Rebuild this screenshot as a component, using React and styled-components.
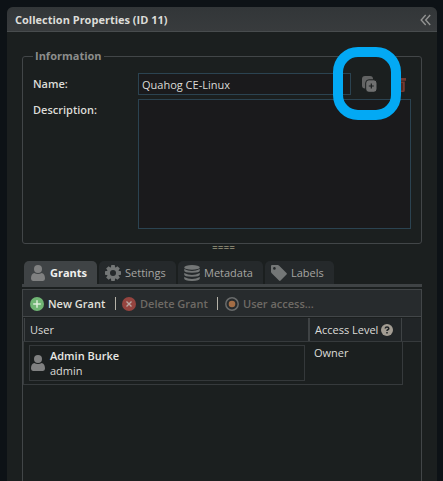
import React from 'react';
import styled, { createGlobalStyle } from 'styled-components';

const Global = createGlobalStyle`
  * { box-sizing: border-box; }
  html, body { margin: 0; height: 100%; background: #0d1216; overflow: hidden; }
  body { font: 11px/16px "Open Sans", "Noto Sans", sans-serif; color: #dcdcd8; }
`;
const Page = styled.main`
  height: 481px; width: 443px; padding: 7px 6px 0 7px; position: relative; overflow: hidden;
`;
const Panel = styled.section`
  height: 500px; background: #1b1f1f; border-radius: 6px 6px 0 0; overflow: hidden;
`;
const Header = styled.header`
  height: 25px; padding: 1px 6px 0 8px; border-bottom: 1px solid #484c4e;
  background: linear-gradient(#323638, #383b3d);
  display: flex; align-items: center; justify-content: space-between;
  font-weight: 700;
  svg { display: block; }
`;
const Body = styled.div`padding: 16px 15px 0;`;
const Fieldset = styled.fieldset`
  margin: 0; padding: 9px 10px 0; height: 196px; border: 1px solid #424648; border-radius: 3px;
`;
const Legend = styled.legend`
  width: 71px; padding: 1px 2px 1px; color: #8c8d8c; font-weight: 700; line-height: 14px;
`;
const Field = styled.div`
  display: grid; grid-template-columns: 105px 213px 1fr; height: 26px;
`;
const Label = styled.label`font-weight: 600; padding-top: 3px;`;
const Input = styled.div`
  height: 22px; border: 1px solid #2b4351; background: #1a1a1c; padding: 3px 3px 0;
`;
const Actions = styled.div`
  display: flex; padding: 3px 0 0 11px; gap: 15px;
  svg { display: block; }
  svg:last-child { margin-top: 2px; }
`;
const TextArea = styled.div`
  grid-column: 2 / 4; width: 273px; height: 130px; border: 1px solid #2b4351; background: #1a1a1c;
`;
const Splitter = styled.div`
  height: 17px; padding-left: 3px; text-align: center; font-size: 10px; line-height: 7px; color: #cfc9a8;
`;
const Tabs = styled.nav`
  display: flex; gap: 2px; padding: 0 2px; height: 26px; border-bottom: 3px solid #3f4345;
`;
const Tab = styled.div`
  width: ${p => p.$w}px; height: 23px; border-radius: 5px 5px 0 0; padding: 1px 0 0 ${p => p.$pad || 6}px;
  display: flex; align-items: center; gap: ${p => (p.$active ? 5 : 4)}px;
  background: ${p => (p.$active ? '#3f4345' : '#25292b')};
  color: ${p => (p.$active ? '#f0f0ee' : '#a5a5a2')};
  font-weight: ${p => (p.$active ? 700 : 400)};
  svg { flex: none; }
`;
const Grid = styled.div`
  margin-top: 2px; height: 240px; border: 1px solid #424648;
`;
const Toolbar = styled.div`
  height: 27px; background: #272b2d; border-bottom: 1px solid #424648;
  display: flex; align-items: center; padding: 1px 0 0 7px;
`;
const Tool = styled.div`
  width: ${p => p.$w}px; display: flex; align-items: center; gap: 4px; white-space: nowrap;
  color: ${p => (p.$off ? '#6e6a65' : '#e0e0dc')};
  font-weight: 600;
  svg { flex: none; }
`;
const Divider = styled.div`
  width: 1px; height: 13px; background: #b5b2a8; margin-right: ${p => p.$gap}px;
`;
const HeadRow = styled.div`
  margin-top: 1px; padding-left: 1px; height: 24px; background: #212527; border-bottom: 1px solid #363a3c;
  display: grid; grid-template-columns: 284px 93px 1fr;
`;
const HeadCell = styled.div`
  border-left: 1px solid #3f4345; padding: 1px 0 0 5px; display: flex; align-items: center; gap: 3px;
  &:nth-child(2) { border-left-width: 2px; }
  svg { margin-top: -1px; }
`;
const Row = styled.div`
  width: 380px; height: 43px; border: 1px solid #363a3c; border-top: 0;
  display: grid; grid-template-columns: 284px 1fr;
`;
const UserCell = styled.div`
  margin: 3px 3px 3px 5px; height: 36px; border: 1px solid #34383a; display: flex; align-items: center;
  gap: 5px; padding-left: 1px; line-height: 15px;
`;
const UserText = styled.div`display: flex; flex-direction: column;`;
const UserName = styled.span`font-weight: 600; color: #e8e8e4;`;
const Level = styled.div`padding: 3px 0 0 6px;`;
const Highlight = styled.div`
  position: absolute; left: 333px; top: 47px; width: 68px; height: 73px;
  border: 10px solid #03a9f4; border-radius: 25px;
`;

const Person = () => (
  <svg width="14" height="16" viewBox="0 0 14 16" fill="#808181">
    <circle cx="7" cy="4" r="4" />
    <path d="M3.2 8q3.8 2 7.6 0C13.2 8.8 14 11 14 13.6q0 2.4-2 2.4H2q-2 0-2-2.4C0 11 .8 8.8 3.2 8z" />
  </svg>
);
const Gear = () => (
  <svg width="16" height="16" viewBox="0 0 16 16">
    <g fill="#737676">
      {[0, 45, 90, 135].map(a => (
        <path key={a} d="M6.3 0h3.4l.5 3v10l-.5 3H6.3l-.5-3V3z" transform={`rotate(${a} 8 8)`} />
      ))}
      <circle cx="8" cy="8" r="6" />
    </g>
    <circle cx="8" cy="8" r="3" fill="#25292b" />
  </svg>
);
const Database = () => (
  <svg width="16" height="16" viewBox="0 0 16 16" fill="#737676">
    <ellipse cx="8" cy="2.4" rx="7.8" ry="2.4" />
    <path d="M.2 4q7.8 4 15.6 0v1.400q0 2.100-7.800 2.300Q.2 7.500.2 5.400z" />
    <path d="M.2 8q7.800 4 15.600 0v1.400q0 2.100-7.800 2.300Q.2 11.500.2 9.400z" />
    <path d="M.2 12q7.800 4 15.600 0v1.400q0 2.300-7.800 2.500Q.2 15.700.2 13.400z" />
  </svg>
);
const TagIcon = () => (
  <svg width="16" height="16" viewBox="0 0 16 16">
    <path d="M1 0h5.500q1 0 1.700.7L15.500 8q.8.800 0 1.600l-5.900 5.900q-.8.800-1.600 0L.7 8.200Q0 7.500 0 6.500V1q0-1 1-1z" fill="#737676" />
    <circle cx="3.400" cy="3.400" r="1.300" fill="#25292b" />
  </svg>
);
const Add = () => (
  <svg width="14" height="14" viewBox="0 0 14 14">
    <circle cx="7" cy="7" r="7" fill="#70b574" />
    <path d="M7 3.200v7.600M3.200 7h7.600" stroke="#dcecd9" strokeWidth="1.500" />
  </svg>
);
const Remove = () => (
  <svg width="14" height="14" viewBox="0 0 14 14">
    <circle cx="7" cy="7" r="7" fill="#95443f" />
    <path d="m4.500 4.500 5 5m0-5-5 5" stroke="#b9a8a4" strokeWidth="1.400" />
  </svg>
);
const Target = () => (
  <svg width="14" height="14" viewBox="0 0 14 14">
    <circle cx="7" cy="7" r="6.200" fill="none" stroke="#696b6b" strokeWidth="1.500" />
    <circle cx="7" cy="7" r="3.300" fill="#a36d45" />
  </svg>
);
const Help = () => (
  <svg width="12" height="12" viewBox="0 0 12 12">
    <circle cx="6" cy="6" r="6" fill="#a39d93" />
    <path d="M4.200 4.500q.1-1.500 1.800-1.500t1.800 1.400Q7.800 5.300 6.800 5.700 6 6.100 6 7M6 8v1.600" fill="none" stroke="#212527" strokeWidth="1.500" />
  </svg>
);
const Collapse = () => (
  <svg width="11" height="12" viewBox="0 0 11 12" fill="none" stroke="#929392" strokeWidth="1.400">
    <path d="M5.700 1 1.200 6l4.500 5M10.200 1 5.700 6l4.500 5" />
  </svg>
);
const Clone = () => (
  <svg width="16" height="16" viewBox="0 0 16 16">
    <rect x="0" y="0" width="11" height="12.500" rx="3" fill="#626363" />
    <rect x="3.700" y="3.800" width="11.300" height="12.500" rx="3.200" fill="#6f7070" stroke="#1b1f1f" />
    <path d="M9.300 7.500v5M6.800 10h5" stroke="#1b1f1f" strokeWidth="1.200" />
  </svg>
);
const Trash = () => (
  <svg width="13" height="14" viewBox="0 0 13 14" fill="#743931">
    <path d="M4.500 0H13v2.800H0V0h4.500zM1.500 3.500h10.300v9q0 1.500-1.500 1.500H3q-1.500 0-1.500-1.500z" />
    <path d="M4 5v7.500M9 5v7.500" stroke="#1b1f1f" />
  </svg>
);

export default function App() {
  return (
    <Page>
      <Global />
      <Panel>
        <Header><span>Collection Properties (ID 11)</span><Collapse /></Header>
        <Body>
          <Fieldset>
            <Legend>Information</Legend>
            <Field>
              <Label>Name:</Label>
              <Input>Quahog CE-Linux</Input>
              <Actions><Clone /><Trash /></Actions>
            </Field>
            <Field>
              <Label>Description:</Label>
              <TextArea />
            </Field>
          </Fieldset>
          <Splitter>====</Splitter>
          <Tabs>
            <Tab $w={73} $pad={7} $active><Person />Grants</Tab>
            <Tab $w={77}><Gear />Settings</Tab>
            <Tab $w={85}><Database />Metadata</Tab>
            <Tab $w={69}><TagIcon />Labels</Tab>
          </Tabs>
          <Grid>
            <Toolbar>
              <Tool $w={85}><Add />New Grant</Tool><Divider $gap={6} />
              <Tool $w={95} $off><Remove />Delete Grant</Tool><Divider $gap={7} />
              <Tool $w={100} $off><Target />User access...</Tool>
            </Toolbar>
            <HeadRow>
              <HeadCell>User</HeadCell>
              <HeadCell>Access Level<Help /></HeadCell>
              <HeadCell />
            </HeadRow>
            <Row>
              <UserCell>
                <Person />
                <UserText><UserName>Admin Burke</UserName><span>admin</span></UserText>
              </UserCell>
              <Level>Owner</Level>
            </Row>
          </Grid>
        </Body>
      </Panel>
      <Highlight />
    </Page>
  );
}
